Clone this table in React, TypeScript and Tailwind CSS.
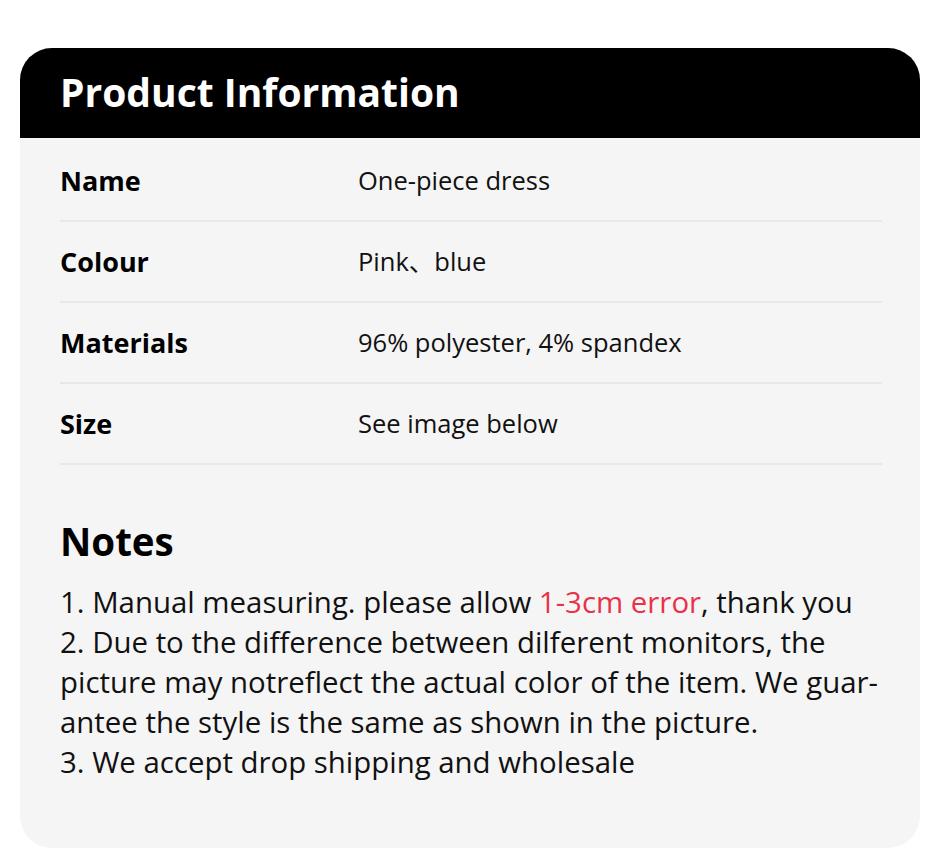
import React from "react";

const rows = [
  ["Name", "One-piece dress"],
  ["Colour", "Pink、blue"],
  ["Materials", "96% polyester, 4% spandex"],
  ["Size", "See image below"],
];

export default function App() {
  return (
    <div className="min-h-[860px] w-[940px] bg-white pt-[48px] pl-[20px]" style={{ fontFamily: '"Open Sans", "Noto Sans", "Noto Sans CJK SC", sans-serif' }}>
      <div className="w-[900px] h-[800px] rounded-[32px] bg-[#f5f5f5] overflow-hidden">
        <div className="h-[90px] bg-black flex items-center pl-[40px]">
          <h1 className="text-white text-[39px] font-bold leading-none pb-[3px]">Product Information</h1>
        </div>
        <div className="px-[40px] pt-[3px]">
          {rows.map(([k, v]) => (
            <div key={k} className="grid grid-cols-[298px_1fr] items-center h-[81px] border-b-[2px] border-[#e8e8e8] mr-[-2px]">
              <div className="text-[27px] font-bold text-black leading-none">{k}</div>
              <div className="text-[25.5px] text-[#111] leading-none">{v}</div>
            </div>
          ))}
        </div>
        <div className="px-[40px] pt-[57px]">
          <h2 className="text-[38.5px] font-bold text-black leading-none">Notes</h2>
          <div className="mt-[21px] text-[29.4px] leading-[40px] text-[#111]">
            <p>1. Manual measuring. please allow <span className="text-[#e8324a]">1-3cm error</span>, thank you</p>
            <p>2. Due to the difference between dilferent monitors, the</p>
            <p>picture may notreflect the actual color of the item. We guar-</p>
            <p>antee the style is the same as shown in the picture.</p>
            <p>3. We accept drop shipping and wholesale</p>
          </div>
        </div>
      </div>
    </div>
  );
}
